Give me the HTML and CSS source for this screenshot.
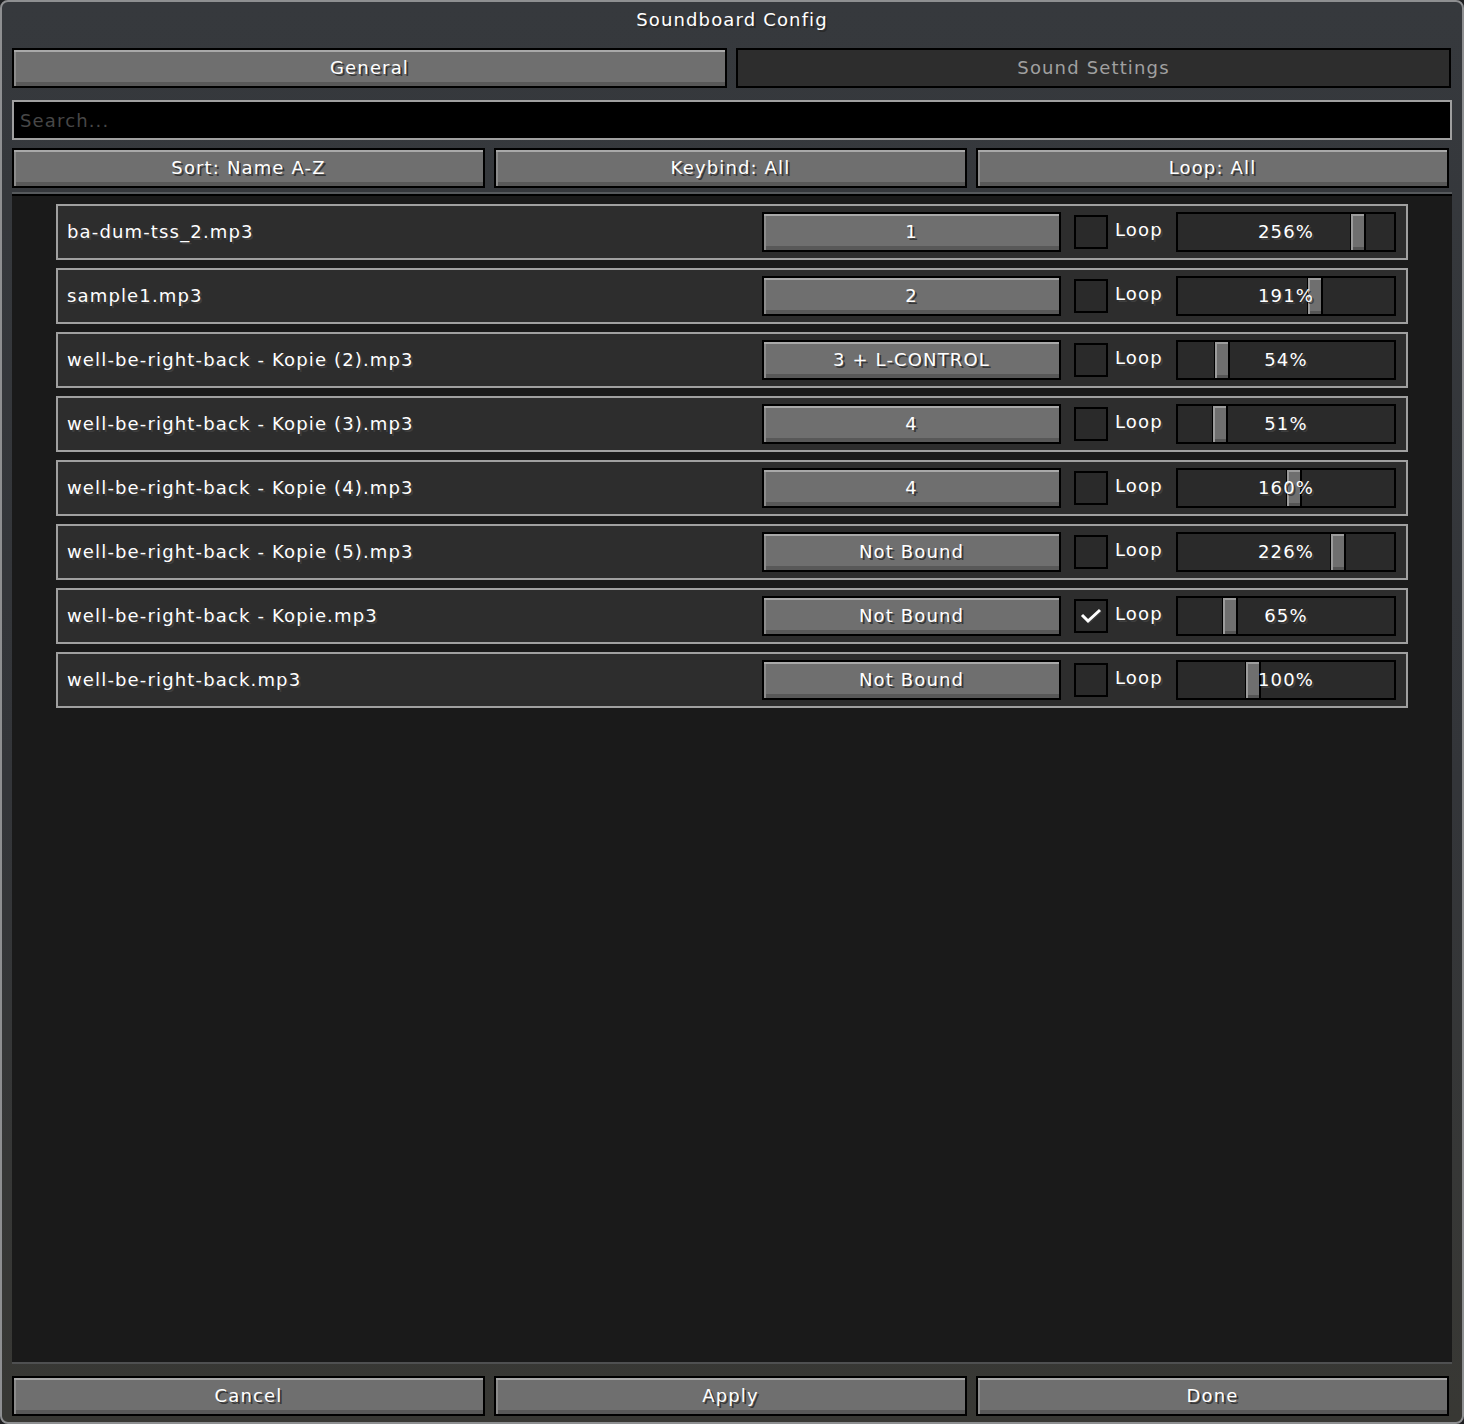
FILE: index.html
```html
<!DOCTYPE html>
<html lang="en">
<head>
    <meta charset="UTF-8">
    <title>Soundboard Config</title>
    <link rel="stylesheet" href="styles.css">
</head>
<body>
    <div class="screen">
        <h1 class="title">Soundboard Config</h1>

        <div class="tabs">
            <button class="btn">General</button>
            <button class="btn btn-off">Sound Settings</button>
        </div>

        <input class="search" type="text" placeholder="Search...">

        <div class="filters">
            <button class="btn">Sort: Name A-Z</button>
            <button class="btn">Keybind: All</button>
            <button class="btn">Loop: All</button>
        </div>

        <div class="list">
            <div class="row">
                <span class="name">ba-dum-tss_2.mp3</span>
                <button class="btn key">1</button>
                <span class="check"></span>
                <span class="loop">Loop</span>
                <div class="slider"><span class="knob" style="left:172px"></span><span class="value">256%</span></div>
            </div>
            <div class="row">
                <span class="name">sample1.mp3</span>
                <button class="btn key">2</button>
                <span class="check"></span>
                <span class="loop">Loop</span>
                <div class="slider"><span class="knob" style="left:129px"></span><span class="value">191%</span></div>
            </div>
            <div class="row">
                <span class="name">well-be-right-back - Kopie (2).mp3</span>
                <button class="btn key">3 + L-CONTROL</button>
                <span class="check"></span>
                <span class="loop">Loop</span>
                <div class="slider"><span class="knob" style="left:36px"></span><span class="value">54%</span></div>
            </div>
            <div class="row">
                <span class="name">well-be-right-back - Kopie (3).mp3</span>
                <button class="btn key">4</button>
                <span class="check"></span>
                <span class="loop">Loop</span>
                <div class="slider"><span class="knob" style="left:34px"></span><span class="value">51%</span></div>
            </div>
            <div class="row">
                <span class="name">well-be-right-back - Kopie (4).mp3</span>
                <button class="btn key">4</button>
                <span class="check"></span>
                <span class="loop">Loop</span>
                <div class="slider"><span class="knob" style="left:108px"></span><span class="value">160%</span></div>
            </div>
            <div class="row">
                <span class="name">well-be-right-back - Kopie (5).mp3</span>
                <button class="btn key">Not Bound</button>
                <span class="check"></span>
                <span class="loop">Loop</span>
                <div class="slider"><span class="knob" style="left:152px"></span><span class="value">226%</span></div>
            </div>
            <div class="row">
                <span class="name">well-be-right-back - Kopie.mp3</span>
                <button class="btn key">Not Bound</button>
                <span class="check">
                    <svg width="22" height="16" viewBox="0 0 22 16">
                        <polyline points="2,7 8,13 20,2" fill="none" stroke="#3a3a3a" stroke-width="3" transform="translate(1,1)"/>
                        <polyline points="2,7 8,13 20,2" fill="none" stroke="#ffffff" stroke-width="3"/>
                    </svg>
                </span>
                <span class="loop">Loop</span>
                <div class="slider"><span class="knob" style="left:44px"></span><span class="value">65%</span></div>
            </div>
            <div class="row">
                <span class="name">well-be-right-back.mp3</span>
                <button class="btn key">Not Bound</button>
                <span class="check"></span>
                <span class="loop">Loop</span>
                <div class="slider"><span class="knob" style="left:67px"></span><span class="value">100%</span></div>
            </div>
        </div>

        <div class="actions">
            <button class="btn">Cancel</button>
            <button class="btn">Apply</button>
            <button class="btn">Done</button>
        </div>
    </div>
</body>
</html>
```

FILE: styles.css
```css
body{margin:0;padding:0;background:#1e1f21;}
body,button,input{font:18px/1 "DejaVu Sans","Noto Sans",sans-serif;letter-spacing:1.15px;}

.screen{box-sizing:border-box;width:1464px;height:1424px;display:flex;flex-direction:column;padding:0 10px 6px;border:2px solid #8e8f91;border-radius:8px;background:linear-gradient(180deg,#36393d 0%,#333539 55%,#383834 100%);}
.title{margin:0 0 12px;height:34px;line-height:36px;text-align:center;font-size:18px;font-weight:normal;color:#fff;text-shadow:2px 2px 0 #2a2a2a;}

/* minecraft style buttons */
.btn{box-sizing:border-box;height:40px;padding:0;display:flex;align-items:center;justify-content:center;border:2px solid #000;background:#6f6f6f;color:#fff;text-shadow:2px 2px 0 #383838;box-shadow:inset 0 2px 0 #a9a9a9,inset 2px 0 0 #8c8c8c,inset 0 -4px 0 #585858;cursor:pointer;}
.btn-off{background:#2d2d2d;color:#a0a0a0;text-shadow:none;box-shadow:none;}

.tabs{display:grid;grid-template-columns:715px 715px;gap:9px;margin-bottom:12px;}
.search{box-sizing:border-box;height:40px;margin:0 0 8px;padding:0 6px;border:2px solid #a0a0a0;background:#000;color:#e0e0e0;outline:none;}
.search::placeholder{color:#474747;}
.filters,.actions{display:grid;grid-template-columns:473px 473px 473px;gap:9px;}

.list{flex:1;display:flex;flex-direction:column;gap:8px;margin:4px 0 12px;padding:10px 44px 0;border-top:2px solid #56595c;border-bottom:2px solid #4f5051;background:#1a1a1a;box-shadow:inset 0 2px 0 #000;}

.row{box-sizing:border-box;height:56px;display:flex;align-items:center;padding:0 10px 0 9px;border:2px solid #a0a0a0;background:#2d2d2d;color:#fff;text-shadow:2px 2px 0 #3f3f3f;}
.row .name{flex:1;}
.row .key{width:299px;margin-right:13px;}
.row .check{box-sizing:border-box;width:34px;height:34px;margin-right:7px;display:flex;align-items:center;justify-content:center;border:2px solid #000;background:#2a2a2a;}
.row .loop{width:61px;padding-bottom:4px;}

.slider{box-sizing:border-box;position:relative;width:220px;height:40px;display:flex;align-items:center;justify-content:center;border:2px solid #000;background:#2a2a2a;}
.slider .knob{position:absolute;top:0;bottom:0;width:16px;box-sizing:border-box;border-left:1px solid #000;border-right:2px solid #000;background:#6f6f6f;box-shadow:inset 2px 2px 0 #9c9c9c,inset 0 -3px 0 #555;}
.slider .value{position:relative;}
```
